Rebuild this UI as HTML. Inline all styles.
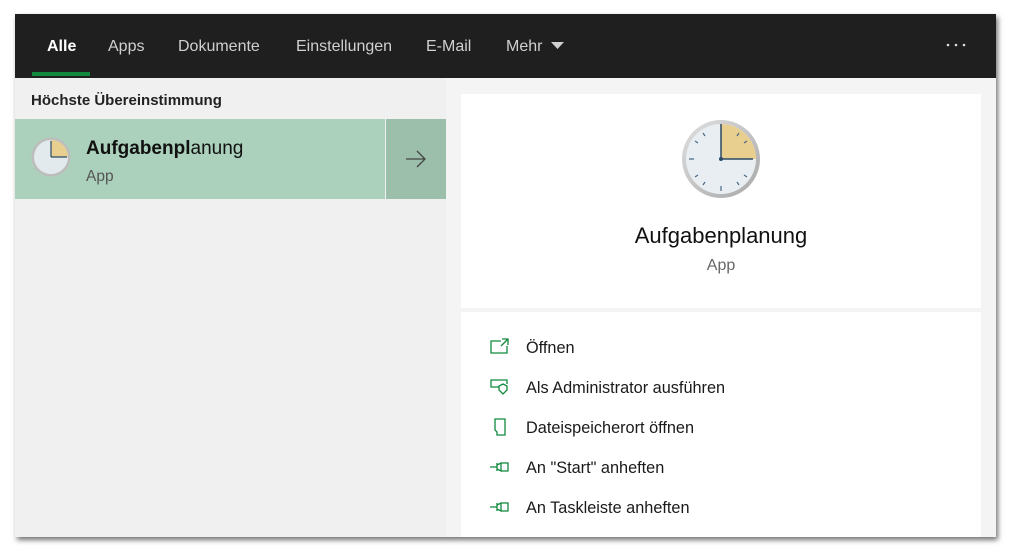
<!DOCTYPE html>
<html><head><meta charset="utf-8"><style>
*{margin:0;padding:0;box-sizing:border-box}
body{width:1011px;height:552px;background:#fff;position:relative;overflow:hidden;font-family:"Liberation Sans",sans-serif}
.win{position:absolute;left:15px;top:14px;width:981px;height:523px;background:#f4f4f4;box-shadow:2px 3px 5px rgba(0,0,0,.55);overflow:hidden}
.top{position:absolute;left:0;top:0;width:981px;height:64px;background:#1f1f1f}
.nav{position:absolute;top:24px;color:#d0d0d0;font-size:16px}
.left{position:absolute;left:0;top:64px;width:431px;height:459px;background:#f0f0f0}
.abs{position:absolute}
.card{position:absolute;background:#fff;left:446px;width:520px}
.act{position:absolute;left:65px;font-size:16.3px;color:#1a1a1a}
.ic{position:absolute;left:28px}
</style></head><body>
<div class="win">
<div class="top">
<div class="nav" style="left:32px;color:#fff;font-weight:bold">Alle</div>
<div class="abs" style="left:17px;top:58px;width:58px;height:4px;background:#10893e"></div>
<div class="nav" style="left:93px">Apps</div>
<div class="nav" style="left:163px">Dokumente</div>
<div class="nav" style="left:281px">Einstellungen</div>
<div class="nav" style="left:411px">E-Mail</div>
<div class="nav" style="left:491px">Mehr</div>
<svg class="abs" style="left:536px;top:28px" width="14" height="8"><path d="M0 0H13L6.5 7Z" fill="#d0d0d0"/></svg>
<svg class="abs" style="left:930px;top:28px" width="22" height="6"><circle cx="3" cy="3" r="1.3" fill="#ddd"/><circle cx="11" cy="3" r="1.3" fill="#ddd"/><circle cx="19" cy="3" r="1.3" fill="#ddd"/></svg>
</div>
<div class="left">
<div class="abs" style="left:16px;top:14px;font-size:15px;font-weight:bold;color:#222">Höchste Übereinstimmung</div>
<div class="abs" style="left:0;top:41px;width:370px;height:80px;background:#abd0bb"></div>
<div class="abs" style="left:371px;top:41px;width:60px;height:80px;background:#9bbfaa"></div>
<svg class="abs" style="left:390px;top:71px" width="22" height="20"><path d="M1 10H20M12 2L20 10L12 18" fill="none" stroke="#444" stroke-width="1.3"/></svg>
<svg class="abs" style="left:15px;top:58px" width="42" height="42" viewBox="-21 -21 42 42">
<circle r="19.5" fill="#bdbdbd"/><circle r="17" fill="#e3eaee"/><path d="M0 0V-17A17 17 0 0 1 17 0Z" fill="#e8cf8f"/><path d="M0 0H16M0 0V-16" stroke="#2a4a66" stroke-width="1.2"/></svg>
<div class="abs" style="left:71px;top:60px;font-size:19px;color:#111"><b>Aufgabenpl</b>anung</div>
<div class="abs" style="left:71px;top:90px;font-size:15.5px;color:#555">App</div>
</div>
<div class="card" style="top:80px;height:214px">
<svg class="abs" style="left:220px;top:25px" width="80" height="80" viewBox="-40 -40 80 80">
<defs><linearGradient id="g" x1="0" y1="0" x2="1" y2="1"><stop offset="0" stop-color="#e0e0e0"/><stop offset="1" stop-color="#a8a8a8"/></linearGradient></defs>
<circle r="39" fill="url(#g)"/><circle r="35" fill="#e8eef1"/><path d="M0 0V-35A35 35 0 0 1 35 0Z" fill="#e8cf8f"/>
<g stroke="#4a6a86" stroke-width="1.2"><path d="M0 27V32M-27 0H-32M-16 -23L-18 -26M-23 -16L-26 -18M-23 16L-26 18M-16 23L-18 26M16 23L18 26M23 16L26 18M16 -23L18 -26M23 -16L26 -18"/></g>
<path d="M0 0H32M0 0V-35" stroke="#2a4a66" stroke-width="1.5"/><circle r="2" fill="#2a4a66"/></svg>
<div class="abs" style="left:0;width:520px;text-align:center;top:129px;font-size:22px;color:#111">Aufgabenplanung</div>
<div class="abs" style="left:0;width:520px;text-align:center;top:163px;font-size:16px;color:#666">App</div>
</div>
<div class="card" style="top:298px;height:230px">
<svg class="ic" style="top:25px" width="22" height="20"><path d="M12 4H2V16H18V9M13 2H19V8M19 2L12 9" fill="none" stroke="#10893e" stroke-width="1.3"/></svg>
<div class="act" style="top:27px">Öffnen</div>
<svg class="ic" style="top:65px" width="22" height="20"><path d="M10 10H2V3H18V7M10 10V13L14 17L18 13V9L14 7L10 9Z" fill="none" stroke="#10893e" stroke-width="1.3"/></svg>
<div class="act" style="top:67px">Als Administrator ausführen</div>
<svg class="ic" style="top:105px" width="22" height="20"><path d="M6 2H16V18H8V15L6 13Z" fill="none" stroke="#10893e" stroke-width="1.3"/></svg>
<div class="act" style="top:107px">Dateispeicherort öffnen</div>
<svg class="ic" style="top:146px" width="22" height="20"><path d="M1 9H8M8 5V13M8 7L12 5V13L8 11M12 5L19 5V13H12" fill="none" stroke="#10893e" stroke-width="1.3"/></svg>
<div class="act" style="top:147px">An "Start" anheften</div>
<svg class="ic" style="top:186px" width="22" height="20"><path d="M1 9H8M8 5V13M8 7L12 5V13L8 11M12 5L19 5V13H12" fill="none" stroke="#10893e" stroke-width="1.3"/></svg>
<div class="act" style="top:187px">An Taskleiste anheften</div>
</div>
</div>
</body></html>
